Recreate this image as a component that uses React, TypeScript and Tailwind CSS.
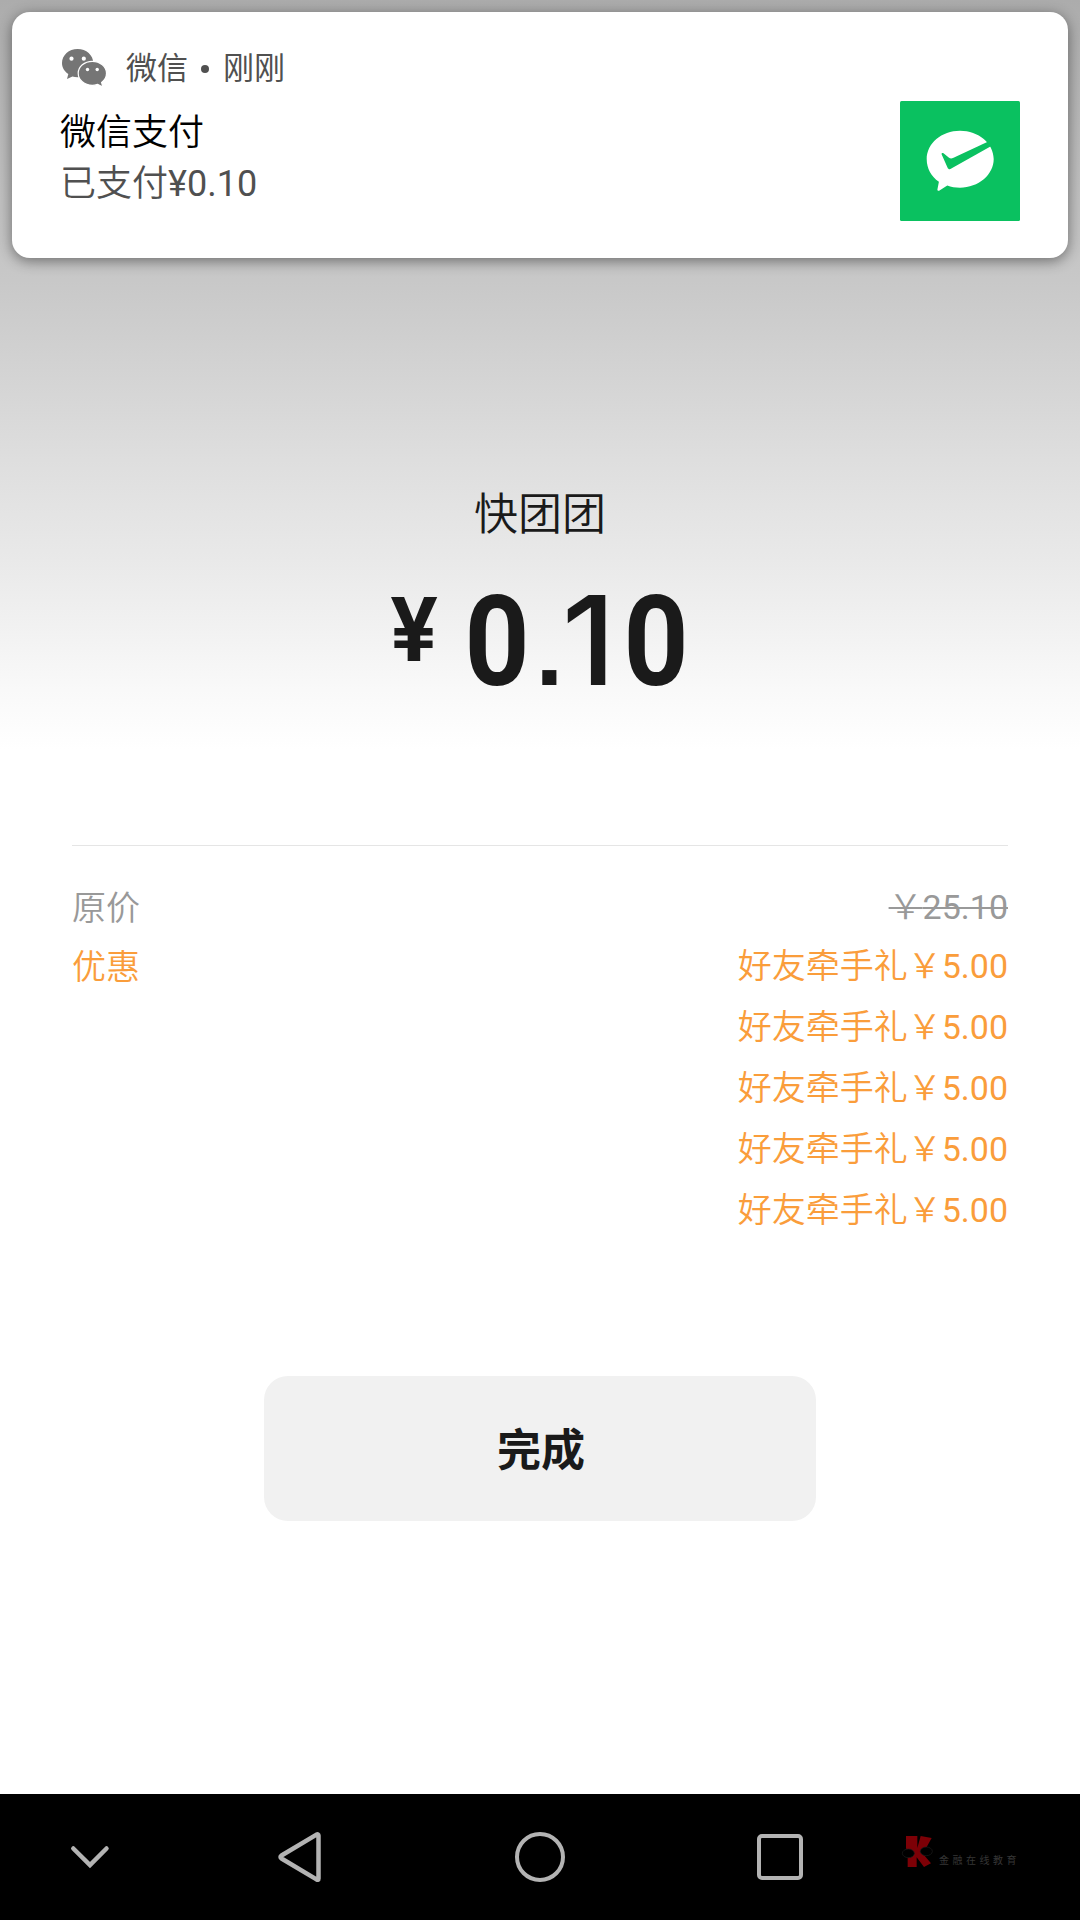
import React from 'react';

const discounts = ['5.00', '5.00', '5.00', '5.00', '5.00'];

const WeChatIcon: React.FC = () => (
  <svg width="46" height="42" viewBox="61 46 46 42">
    <g fill="#757575">
      <path d="M77.6 48c8.700 0 15.700 6.200 15.700 14s-7 14.200-15.700 14.200c-1.800 0-3.600-.3-5.200-.8L67 78l1.300-5C64.300 70.400 62 66.500 62 62c0-7.800 6.900-14 15.600-14z" />
      <path
        d="M92.300 60.300c7.900 0 14.200 5.400 14.200 12 0 3.800-1.900 7-4.900 9.200l1.300 4.600-5.300-2.700c-1.700.5-3.400.9-5.300.9-7.900 0-14.100-5.400-14.100-12s6.200-12 14.100-12z"
        stroke="#fff"
        strokeWidth="1.200"
      />
    </g>
    <g fill="#fff">
      <circle cx="71.500" cy="57.700" r="2.100" />
      <circle cx="83.800" cy="57.700" r="2.100" />
      <circle cx="87.500" cy="68.500" r="1.700" />
      <circle cx="97.200" cy="68.500" r="1.700" />
    </g>
  </svg>
);

const PayLogo: React.FC = () => (
  <svg width="120" height="120" viewBox="0 0 120 120">
    <rect width="120" height="120" rx="1.500" fill="#0ac160" />
    <path
      d="M60 29.700c18.500 0 33.700 12.700 33.700 28.400S78.500 86.700 60 86.700c-4.600 0-9-.7-12.700-2.200L39.500 89.500c-1 .7-2.200.3-2.100-1l1.500-7.700C31.200 75.700 26.700 67.400 26.700 58.100c0-15.700 14.900-28.400 33.300-28.400z"
      fill="#fff"
    />
    <path
      d="M41.700 53.500c-.5-1.500.6-2.100 1.800-1.200l5.200 4.300c1.400 1 2.700 1.200 4.300.5L86.700 41.300l4-1.800 2 4-2.700 2.200-38.700 21.900c-1.600 1-2.900.7-3.700-.9z"
      fill="#0ac160"
    />
  </svg>
);

const WatermarkLogo: React.FC = () => (
  <svg width="36" height="34" viewBox="12 20 108 102">
    <path d="M30 26h34v36l10-36 33 6-20 36-9 8 27 32-21 11-22-29v29H35V80l-5-18z" fill="#7d0006" />
    <g fill="#000" stroke="#1c1c1c" strokeWidth="2">
      <ellipse cx="37" cy="78" rx="18" ry="13" />
      <ellipse cx="91" cy="72" rx="18" ry="13" />
    </g>
  </svg>
);

const Notification: React.FC = () => (
  <div className="mx-3 h-[246px] rounded-[18px] bg-white flex justify-between pl-[49px] pr-12 shadow-[0_3px_14px_rgba(0,0,0,0.45)]">
    <div className="pt-[34px]">
      <div className="flex items-center h-[44px] text-[31px] text-[#505050]">
        <WeChatIcon />
        <span className="ml-[19px] mt-[3px]">微信</span>
        <span className="ml-[13px] mr-[14px] mt-[2px] size-[8px] rounded-full bg-[#505050]" />
        <span className="mt-[3px]">刚刚</span>
      </div>
      <div className="mt-[18px] -ml-px text-[36px] leading-[51px] font-[350] text-black">微信支付</div>
      <div className="-ml-px text-[36px] leading-[51px] font-[350] text-[#505050]">
        已支付<span className="font-normal">¥0.10</span>
      </div>
    </div>
    <div className="pt-[89px]">
      <PayLogo />
    </div>
  </div>
);

const Amount: React.FC = () => (
  <div className="mt-[31px] h-[126px] flex justify-center items-baseline text-[#1a1a1a] text-[126px] leading-none">
    <div className="w-[55px] mr-[18px] mt-[7px] self-start flex justify-center font-[Inter] font-bold text-[88px]">
      <span className="scale-x-[0.97]">¥</span>
    </div>
    <div className="w-[74px] flex justify-center font-bold">
      <span className="scale-x-[0.9]">0</span>
    </div>
    <div className="w-[31px] flex justify-center font-['Liberation_Sans'] font-bold text-[100px]">
      <span>.</span>
    </div>
    <div className="w-[54px] pr-[7px] flex justify-center font-[Inter] font-medium text-[124px]">
      <span className="scale-x-[1.05]">1</span>
    </div>
    <div className="w-[74px] flex justify-center font-bold">
      <span className="scale-x-[0.9]">0</span>
    </div>
  </div>
);

const NavBar: React.FC = () => (
  <div className="h-[126px] bg-black flex items-center text-[#b3b3b3]">
    <div className="w-[180px] flex justify-center">
      <svg width="50" height="50" fill="none" stroke="currentColor" strokeWidth="4.500" strokeLinecap="round">
        <path d="M8.300 16.500L25 33l16.500-16.500" />
      </svg>
    </div>
    <div className="w-60 flex justify-center">
      <svg width="54" height="54" fill="none" stroke="currentColor" strokeWidth="4.500" strokeLinejoin="round">
        <path d="M8.500 25.500L43.500 4.600q2-.800 2 1v42.800q0 2-2 1L8.500 28.500q-2-1.500 0-3z" />
      </svg>
    </div>
    <div className="w-60 flex justify-center">
      <div className="size-[50px] rounded-full border-[4.500px] border-[#b3b3b3]" />
    </div>
    <div className="w-60 flex justify-center">
      <div className="size-[46px] rounded-[5px] border-[4.500px] border-[#b3b3b3]" />
    </div>
    <div className="flex items-end -mt-3">
      <WatermarkLogo />
      <span className="ml-[3px] text-[10px] leading-[14px] tracking-[3.500px] text-[#363636]">金融在线教育</span>
    </div>
  </div>
);

export default function App() {
  return (
    <div className="w-[1080px] h-[1920px] flex flex-col overflow-hidden bg-white font-[Roboto,'Noto_Sans_CJK_SC',sans-serif]">
      <div className="h-[750px] pt-3 bg-[linear-gradient(to_bottom,#acacac_0px,#c8c8c8_280px,#dedede_460px,#e9e9e9_560px,#f9f9f9_690px,#ffffff_750px)]">
        <Notification />
        <div className="mt-[225px] text-center text-[44px] leading-[64px] font-[350] text-[#1a1a1a]">快团团</div>
        <Amount />
      </div>

      <div className="mx-[72px] mt-[95px] pt-[33px] border-t border-[#e5e5e5] text-[34px] leading-[61px] font-[350]">
        <div className="flex justify-between leading-[57px] text-[#999999]">
          <span className="pt-px -mb-px">原价</span>
          <span className="line-through decoration-2">
            {'\uFFE5'}
            <span className="font-normal">25.10</span>
          </span>
        </div>
        <div className="flex justify-between text-[#fa9d3b]">
          <span className="pt-px">优惠</span>
          <div className="text-right">
            {discounts.map((amount, i) => (
              <div key={i}>
                好友牵手礼{'\uFFE5'}
                <span className="font-normal">{amount}</span>
              </div>
            ))}
          </div>
        </div>
      </div>

      <button className="mx-auto mt-[135px] pt-[5px] pl-[2px] w-[552px] h-[145px] rounded-[24px] bg-[#f1f1f1] text-[44px] font-bold text-[#1a1a1a]">
        完成
      </button>

      <div className="mt-auto">
        <NavBar />
      </div>
    </div>
  );
}
